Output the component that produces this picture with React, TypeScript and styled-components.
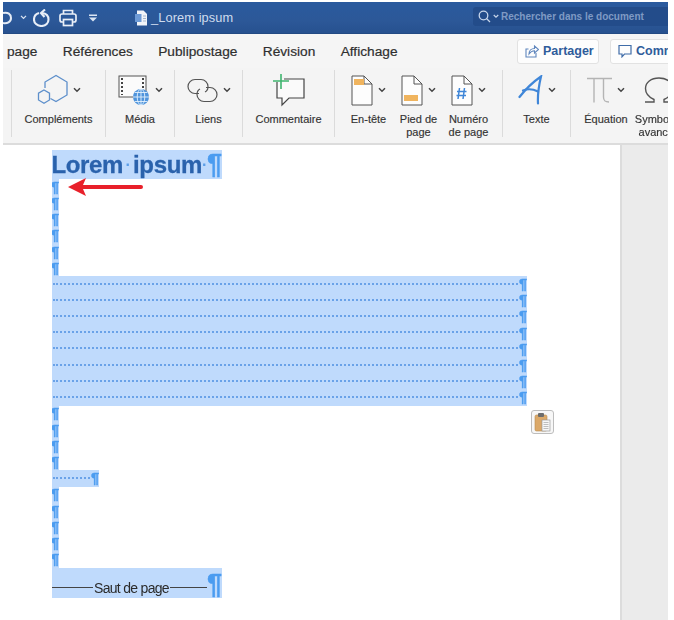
import React from "react";
import styled, { createGlobalStyle } from "styled-components";

const Global = createGlobalStyle`
  html, body { margin: 0; padding: 0; background: #fff; overflow: hidden; }
  body { font-family: "Liberation Sans", Arial, sans-serif; }
`;

const Frame = styled.div`
  margin: 2px 6px 0 3px;
  height: 618px;
  display: flex;
  flex-direction: column;
  overflow: hidden;
  filter: blur(0.35px);
`;

const TitleBar = styled.div`
  height: 32px;
  flex: none;
  display: flex;
  align-items: center;
  background: linear-gradient(#2a5a9e, #2c5898 60%, #27518f);
  color: #dbe5f3;
  border-bottom: 1px solid #234a83;
  box-sizing: border-box;
`;

const QuickIcon = styled.svg<{ $ml: number }>`
  margin-left: ${(p) => p.$ml}px;
  flex: none;
  display: block;
`;

const DocTitle = styled.span`
  margin-left: 4px;
  font-size: 12.8px;
  letter-spacing: 0.1px;
  color: #cfdcee;
`;

const SearchBox = styled.div`
  margin-left: auto;
  width: 195px;
  height: 19px;
  margin-bottom: 2px;
  display: flex;
  align-items: center;
  gap: 2px;
  padding-left: 5px;
  box-sizing: border-box;
  background: #234c8a;
  border-radius: 3px 0 0 3px;
  color: #7f9ac4;
  font-size: 10px;
  font-weight: 700;
  white-space: nowrap;
`;

const TabBar = styled.div`
  height: 34px;
  flex: none;
  display: flex;
  align-items: center;
  gap: 25.4px;
  padding-left: 4px;
  background: #f5f5f5;
`;

const Tab = styled.span`
  font-size: 13.7px;
  color: #2f2f2f;
  -webkit-text-stroke: 0.2px #2f2f2f;
`;

const TabActions = styled.div`
  margin-left: auto;
  display: flex;
  gap: 11px;
  width: 151px;
  flex: none;
`;

const ActionButton = styled.div<{ $w: number }>`
  width: ${(p) => p.$w}px;
  flex: none;
  height: 25px;
  box-sizing: border-box;
  display: flex;
  align-items: center;
  gap: 4px;
  padding-left: 7px;
  background: #fdfdfd;
  border: 1px solid #e2e2e2;
  border-radius: 3px;
  color: #2f5c9b;
  font-size: 12.5px;
  font-weight: 700;
  white-space: nowrap;
  & > svg {
    flex: none;
  }
`;

const Ribbon = styled.div`
  height: 77px;
  flex: none;
  display: flex;
  padding: 2px 0 6px 8px;
  box-sizing: border-box;
  background: #f4f4f4;
  border-bottom: 2px solid #dcdcdc;
`;

const Group = styled.div<{ $w: number; $start?: boolean }>`
  width: ${(p) => p.$w}px;
  flex: none;
  display: flex;
  justify-content: ${(p) => (p.$start ? "flex-start" : "center")};
  box-sizing: border-box;
  border-left: 1px solid #dbdbdb;
`;

const Tool = styled.div<{ $w: number }>`
  width: ${(p) => p.$w}px;
  flex: none;
  display: flex;
  flex-direction: column;
  align-items: center;
`;

const ToolIcons = styled.div`
  height: 40px;
  flex: none;
  display: flex;
  align-items: center;
  gap: 5px;
`;

const ToolLabel = styled.div`
  margin-top: 3px;
  flex: none;
  font-size: 11px;
  line-height: 13px;
  text-align: center;
  color: #333;
  white-space: nowrap;
  -webkit-text-stroke: 0.15px #333;
`;

const DocArea = styled.div`
  flex: 1;
  min-height: 0;
  display: flex;
`;

const Page = styled.div`
  position: relative;
  flex: 1;
  padding: 5px 0 0 49px;
  background: #fff;
`;

const Gutter = styled.div`
  width: 46px;
  flex: none;
  background: #ebebeb;
  border-left: 2px solid #dcdcdc;
`;

const Sel = styled.div<{ $w: number; $h: number }>`
  width: ${(p) => p.$w}px;
  height: ${(p) => p.$h}px;
  background: #bfdafc;
  display: flex;
  align-items: center;
  justify-content: flex-end;
  overflow: hidden;
  box-sizing: border-box;
`;

const Mark = styled.span<{ $size?: number }>`
  flex: none;
  color: #4b9cf0;
  font-weight: 700;
  font-family: "Liberation Sans", Arial, sans-serif;
  font-size: ${(p) => p.$size ?? 14.5}px;
  letter-spacing: 0;
  -webkit-text-stroke: 0.4px #4b9cf0;
  line-height: 1;
`;

const Leader = styled.div`
  flex: 1;
  margin: 0 1px 1px 1px;
  border-top: 2px dotted #6aa2e8;
`;

const Block = styled.div`
  display: flex;
  flex-direction: column;
`;

const Heading = styled.div`
  flex: 1;
  display: flex;
  align-items: center;
  justify-content: flex-end;
  font-size: 24px;
  letter-spacing: -0.35px;
  font-weight: 700;
  color: #2a62ac;
  white-space: nowrap;
  line-height: 29px;
  -webkit-text-stroke: 0.3px #2a62ac;
`;

const Dot = styled.span<{ $w: number }>`
  flex: none;
  width: ${(p) => p.$w}px;
  text-align: center;
  color: #5b9ee8;
  font-size: 16px;
  -webkit-text-stroke: 0;
`;

const BreakRow = styled.div`
  flex: 1;
  display: flex;
  align-items: center;
  margin-top: 10px;
  font-size: 14px;
  letter-spacing: -0.7px;
  color: #2b2b2b;
  white-space: nowrap;
`;

const BreakRule = styled.div<{ $w: number }>`
  width: ${(p) => p.$w}px;
  flex: none;
  border-top: 1px solid #444;
`;

const BreakText = styled.span`
  flex: none;
  margin: 0 1px;
`;

const BreakMark = styled(Mark)`
  margin-top: -6px;
`;

const Arrow = styled.svg`
  position: absolute;
  left: 64px;
  top: 32px;
`;

const PasteButton = styled.div`
  position: absolute;
  left: 528px;
  top: 265px;
  width: 23px;
  height: 24px;
  box-sizing: border-box;
  display: flex;
  align-items: center;
  justify-content: center;
  background: #f7f7f7;
  border: 1px solid #bdbdbd;
  border-radius: 3px;
`;

const Chevron = () => (
  <svg width="8" height="6" viewBox="0 0 8 6" fill="none" stroke="#444" strokeWidth="1.5">
    <path d="M1 1.2 L4 4.2 L7 1.2" />
  </svg>
);

const PageSheet = ({ children }: { children: React.ReactNode }) => (
  <svg width="22" height="31" viewBox="0 0 22 31" fill="none">
    <path d="M1 1 H13 L21 9 V30 H1 Z" fill="#fdfdfd" stroke="#555" strokeWidth="1" />
    <path d="M13 1 V9 H21" stroke="#555" strokeWidth="1" />
    {children}
  </svg>
);

const ROW = 16.2;

const marks = (n: number, prefix: string) =>
  Array.from({ length: n }, (_, i) => (
    <Sel key={prefix + i} $w={7} $h={ROW}>
      <Mark>¶</Mark>
    </Sel>
  ));

export default function App() {
  return (
    <>
      <Global />
      <Frame>
        <TitleBar>
          <QuickIcon $ml={0} width="10" height="14" viewBox="0 0 10 14" fill="none" stroke="#e4ebf5" strokeWidth="2">
            <path d="M0 2 C5 1 8 3 8 7 C8 11 4 13 0 12" />
          </QuickIcon>
          <QuickIcon $ml={7} width="7" height="5" viewBox="0 0 8 6" fill="none" stroke="#dbe5f3" strokeWidth="1.5">
            <path d="M1 1 L4 4 L7 1" />
          </QuickIcon>
          <QuickIcon $ml={6} width="17" height="18" viewBox="0 0 17 18" fill="none" stroke="#e8eef7" strokeWidth="2.1">
            <path d="M6 4 C2.5 5 1 8 1 10.5 C1 14 4 17 8.5 17 C13 17 15.5 14 15.5 10.5 C15.5 7 13 4.5 9 4" />
            <path d="M12 0.5 L8 4 L11.5 8" />
          </QuickIcon>
          <QuickIcon $ml={9} width="18" height="18" viewBox="0 0 18 18" fill="none" stroke="#e8eef7" strokeWidth="1.7">
            <path d="M4.5 5 V1.5 H13.5 V5" />
            <rect x="1" y="5" width="16" height="8" rx="2" />
            <rect x="4.5" y="10.5" width="9" height="6" fill="#2c5898" />
          </QuickIcon>
          <QuickIcon $ml={12} width="8" height="8" viewBox="0 0 8 8" fill="#dbe5f3">
            <rect x="0" y="0.5" width="8" height="1.5" />
            <path d="M0 3.5 H8 L4 7.5 Z" />
          </QuickIcon>
          <QuickIcon $ml={38} width="12" height="16" viewBox="0 0 12 16">
            <path d="M2 0.5 H8.5 L12 4 V15.5 H2 Z" fill="#f2f4f8" />
            <rect x="0" y="4" width="6.5" height="8" fill="#6d9ad6" />
            <path d="M8 6 H11 M8 8.5 H11 M8 11 H11" stroke="#a9b8cc" strokeWidth="1" />
          </QuickIcon>
          <DocTitle>_Lorem ipsum</DocTitle>
          <SearchBox>
            <svg width="13" height="13" viewBox="0 0 13 13" fill="none" stroke="#c7d5ea" strokeWidth="1.3">
              <circle cx="5.5" cy="5.5" r="4.3" />
              <path d="M8.5 8.5 L12 12" />
            </svg>
            <svg width="6" height="5" viewBox="0 0 8 6" fill="none" stroke="#c7d5ea" strokeWidth="1.6">
              <path d="M1 1 L4 4 L7 1" />
            </svg>
            <span>Rechercher dans le document</span>
          </SearchBox>
        </TitleBar>

        <TabBar>
          <Tab>page</Tab>
          <Tab>Références</Tab>
          <Tab>Publipostage</Tab>
          <Tab>Révision</Tab>
          <Tab>Affichage</Tab>
          <TabActions>
            <ActionButton $w={82}>
              <svg width="14" height="14" viewBox="0 0 14 14" fill="none" stroke="#5f86bd" strokeWidth="1.1">
                <path d="M3.5 5 H1 V13 H11 V9" />
                <path d="M4 10 C4 6.5 6.5 4.5 9.5 4.5 V2 L13.5 5.5 L9.5 9 V6.7 C7.5 6.7 5.5 7.7 4 10 Z" />
              </svg>
              <span>Partager</span>
            </ActionButton>
            <ActionButton $w={110}>
              <svg width="14" height="14" viewBox="0 0 14 14" fill="none" stroke="#3f6ca8" strokeWidth="1.2">
                <path d="M1 1.5 H13 V10 H6.5 L4 12.8 V10 H1 Z" />
              </svg>
              <span>Commentaires</span>
            </ActionButton>
          </TabActions>
        </TabBar>

        <Ribbon>
          <Group $w={94}>
            <Tool $w={90}>
              <ToolIcons>
                <svg width="31" height="32" viewBox="0 0 31 32" fill="none" stroke="#5d8fcb" strokeWidth="1.3">
                  <path d="M8 14 V8 L19 1.5 L30 8 V21 L19 27.5 L13.5 24.5" />
                  <path d="M7 16 L12.5 19.2 V26 L7 29.2 L1.5 26 V19.2 Z" />
                </svg>
                <Chevron />
              </ToolIcons>
              <ToolLabel>Compléments</ToolLabel>
            </Tool>
          </Group>
          <Group $w={69}>
            <Tool $w={66}>
              <ToolIcons>
                <svg width="32" height="32" viewBox="0 0 32 32" fill="none">
                  <rect x="1" y="2" width="27" height="21" fill="#fbfbfb" stroke="#555" strokeWidth="1" />
                  <path d="M4 4 V21 M25 4 V21" stroke="#444" strokeWidth="2" strokeDasharray="2 2" />
                  <circle cx="23" cy="23" r="8" fill="#4f94dc" />
                  <path d="M15 23 H31 M23 15 V31 M17 18.5 H29 M17 27.5 H29" stroke="#e3f0fc" strokeWidth="0.9" />
                  <ellipse cx="23" cy="23" rx="3.8" ry="8" stroke="#e3f0fc" strokeWidth="0.9" />
                </svg>
                <Chevron />
              </ToolIcons>
              <ToolLabel>Média</ToolLabel>
            </Tool>
          </Group>
          <Group $w={68}>
            <Tool $w={66}>
              <ToolIcons>
                <svg width="31" height="25" viewBox="0 0 31 25" fill="none" stroke="#555" strokeWidth="1.2">
                  <path d="M12 15.5 H8 A7 7 0 0 1 8 1.5 H14 A7 7 0 0 1 21 8.5 C21 11 20 13 18 14" />
                  <path d="M19 9.5 H23 A7 7 0 0 1 23 23.5 H17 A7 7 0 0 1 10 16.5 C10 14 11 12 13 11" />
                </svg>
                <Chevron />
              </ToolIcons>
              <ToolLabel>Liens</ToolLabel>
            </Tool>
          </Group>
          <Group $w={92}>
            <Tool $w={90}>
              <ToolIcons>
                <svg width="32" height="33" viewBox="0 0 32 33" fill="none">
                  <path d="M4 8 V24 H9 V31 L16 24 H31 V5 H11" stroke="#444" strokeWidth="1.2" fill="#fafafa" />
                  <path d="M0 7 H16 M8 0 V15" stroke="#3fb56f" strokeWidth="1.6" />
                </svg>
              </ToolIcons>
              <ToolLabel>Commentaire</ToolLabel>
            </Tool>
          </Group>
          <Group $w={168}>
            <Tool $w={50}>
              <ToolIcons>
                <PageSheet>
                  <rect x="3" y="4" width="10" height="6" fill="#f0b45e" />
                </PageSheet>
                <Chevron />
              </ToolIcons>
              <ToolLabel>En-tête</ToolLabel>
            </Tool>
            <Tool $w={50}>
              <ToolIcons>
                <PageSheet>
                  <rect x="3" y="20" width="14" height="6" fill="#f0b45e" />
                </PageSheet>
                <Chevron />
              </ToolIcons>
              <ToolLabel>
                Pied de
                <br />
                page
              </ToolLabel>
            </Tool>
            <Tool $w={50}>
              <ToolIcons>
                <PageSheet>
                  <path d="M8.5 13 L7 24 M13.5 13 L12 24 M6 16.5 H15.5 M5.5 20.5 H15" stroke="#3f86d8" strokeWidth="1.5" />
                </PageSheet>
                <Chevron />
              </ToolIcons>
              <ToolLabel>
                Numéro
                <br />
                de page
              </ToolLabel>
            </Tool>
          </Group>
          <Group $w={68}>
            <Tool $w={66}>
              <ToolIcons>
                <svg width="25" height="30" viewBox="0 0 25 30" fill="none" stroke="#3f86d8" strokeWidth="2.2" strokeLinecap="round">
                  <path d="M1.5 22 C7 15 15 7 23 1.5 C21 10 19.5 20 20 28.5" />
                  <path d="M5 15.5 C10 13.5 15 14 20 16.5" />
                </svg>
                <Chevron />
              </ToolIcons>
              <ToolLabel>Texte</ToolLabel>
            </Tool>
          </Group>
          <Group $w={106} $start>
            <Tool $w={70}>
              <ToolIcons>
                <svg width="25" height="27" viewBox="0 0 25 27" fill="none" stroke="#b4b4b4" strokeWidth="1.4">
                  <path d="M0 1.5 H25 M7 1.5 V25.5 M16.5 1.5 V20 C16.5 24 18 25 22 25" />
                </svg>
                <Chevron />
              </ToolIcons>
              <ToolLabel>Équation</ToolLabel>
            </Tool>
            <Tool $w={36}>
              <ToolIcons>
                <svg width="30" height="26" viewBox="0 0 30 26" fill="none" stroke="#555" strokeWidth="1.4">
                  <path d="M1 25 H10 V22.5 C4.5 20 1.5 16.5 1.5 11.5 C1.5 5.5 7 1 15 1 C23 1 28.5 5.5 28.5 11.5 C28.5 16.5 25.5 20 20 22.5 V25 H29" />
                </svg>
              </ToolIcons>
              <ToolLabel>
                Symboles
                <br />
                avancés
              </ToolLabel>
            </Tool>
          </Group>
        </Ribbon>

        <DocArea>
          <Page>
            <Block>
              <Sel $w={170} $h={29}>
                <Heading>
                  Lorem
                  <Dot $w={10}>·</Dot>
                  ipsum
                  <Dot $w={5}>·</Dot>
                  <Mark $size={27}>¶</Mark>
                </Heading>
              </Sel>
              {marks(6, "a")}
              {Array.from({ length: 8 }, (_, i) => (
                <Sel key={i} $w={475} $h={ROW}>
                  <Leader />
                  <Mark>¶</Mark>
                </Sel>
              ))}
              {marks(4, "b")}
              <Sel $w={47} $h={ROW}>
                <Leader />
                <Mark>¶</Mark>
              </Sel>
              {marks(5, "c")}
              <Sel $w={170} $h={30}>
                <BreakRow>
                  <BreakRule $w={41} />
                  <BreakText>Saut de page</BreakText>
                  <BreakRule $w={37} />
                  <BreakMark $size={27}>¶</BreakMark>
                </BreakRow>
              </Sel>
            </Block>
            <Arrow width="80" height="20" viewBox="0 0 80 20">
              <path d="M1 10 L19 1 L16 8 H74 A2 2 0 0 1 74 12 H16 L19 19 Z" fill="#e8202a" />
            </Arrow>
            <PasteButton>
              <svg width="17" height="20" viewBox="0 0 17 20">
                <rect x="1" y="3" width="12" height="16" rx="1.5" fill="#dba868" stroke="#b98a4e" strokeWidth="0.6" />
                <rect x="4" y="1" width="6" height="4" rx="1" fill="#6c6c6c" />
                <rect x="8" y="8" width="8" height="11" fill="#f7f7f7" stroke="#9a9a9a" strokeWidth="0.7" />
                <path d="M9.5 10.5 H14.5 M9.5 12.5 H14.5 M9.5 14.5 H14.5 M9.5 16.5 H14.5" stroke="#a5a5a5" strokeWidth="0.7" />
              </svg>
            </PasteButton>
          </Page>
          <Gutter />
        </DocArea>
      </Frame>
    </>
  );
}
